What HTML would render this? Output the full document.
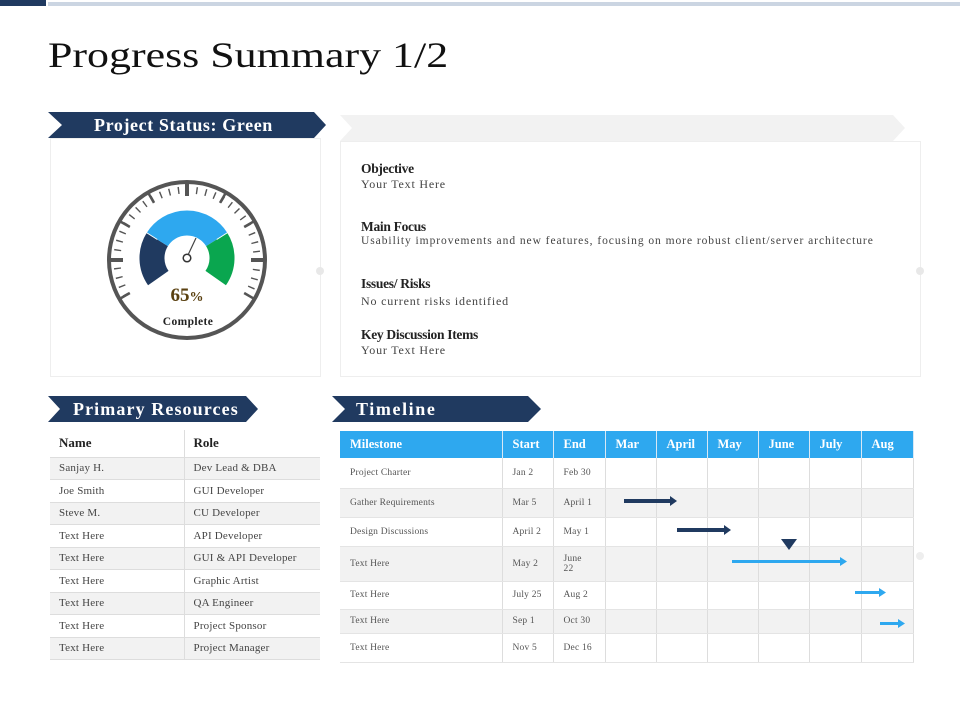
<!DOCTYPE html>
<html><head><meta charset="utf-8"><style>
*{margin:0;padding:0;box-sizing:border-box}
body{width:960px;height:720px;background:#fff;position:relative;overflow:hidden;font-family:"Liberation Serif",serif;color:#333}
.a{position:absolute}
.title{left:48px;top:34px;font-size:36px;color:#111;transform:scaleX(1.22);transform-origin:left top;white-space:nowrap}
.bn{color:#fff;font-size:18px;font-weight:bold;line-height:26px;white-space:nowrap}
.sec{font-size:13.5px;font-weight:bold;color:#222;letter-spacing:-0.3px}
.txt{font-size:12px;color:#444;white-space:nowrap}
table{border-collapse:collapse;position:absolute}
.rt td{height:22.5px;font-size:11px;color:#444;padding-left:9px;border-bottom:1px solid #ddd;letter-spacing:0.2px}
.rt td+td{border-left:1px solid #ddd}
.rt tr:nth-child(even) td{background:#f2f2f2}
.rt th{height:27px;text-align:left;font-size:13px;padding-left:9px;color:#222;border-bottom:1px solid #ddd}
.rt th+th{border-left:1px solid #ddd}
.gt th{background:#2ea8ef;color:#fff;font-size:12.5px;height:27px;text-align:left;padding-left:10px;border-right:1px solid #d8e8f5}
.gt td{font-size:9.5px;color:#555;padding-left:10px;border-right:1px solid #ddd;border-bottom:1px solid #e4e4e4;letter-spacing:0.2px}
</style></head><body>
<div class="a" style="left:0;top:0;width:46px;height:6px;background:#203a60"></div>
<div class="a" style="left:48px;top:2px;width:912px;height:4px;background:#cbd5e2"></div>
<div class="a title">Progress Summary 1/2</div>

<svg class="a" style="left:0;top:0" width="960" height="720">
<polygon points="48,112 314,112 326,125 314,138 48,138 62,125" fill="#203a60"/>
<polygon points="340,115 893,115 905,128 893,141 340,141 352,128" fill="#f2f2f2"/>
<polygon points="48,396 246,396 258,409 246,422 48,422 60,409" fill="#203a60"/>
<polygon points="332,396 528,396 541,409 528,422 332,422 345,409" fill="#203a60"/>
<rect x="50.5" y="138.5" width="270" height="238" fill="none" stroke="#eee"/>
<rect x="340.5" y="141.5" width="580" height="235" fill="none" stroke="#eee"/>
<circle cx="320" cy="271" r="4" fill="#e8e8e8"/>
<circle cx="920" cy="271" r="4" fill="#e8e8e8"/>
<circle cx="920" cy="556" r="4" fill="#eee"/>
<circle cx="187" cy="260" r="78" fill="#fff" stroke="#555" stroke-width="4"/>
<path d="M126.4 295 A70 70 0 1 1 247.6 295" fill="none" stroke="#555" stroke-width="7" stroke-dasharray="1.4 7.76"/>
<g stroke="#555" stroke-width="2.5">
<line x1="187" y1="182" x2="187" y2="196" stroke-width="4" transform="rotate(0 187 260)"/>
<line x1="187" y1="182" x2="187" y2="196" stroke-width="4" transform="rotate(90 187 260)"/>
<line x1="187" y1="182" x2="187" y2="196" stroke-width="4" transform="rotate(-90 187 260)"/>
<line x1="187" y1="182" x2="187" y2="194" transform="rotate(30 187 260)"/>
<line x1="187" y1="182" x2="187" y2="194" transform="rotate(60 187 260)"/>
<line x1="187" y1="182" x2="187" y2="194" transform="rotate(120 187 260)"/>
<line x1="187" y1="182" x2="187" y2="194" transform="rotate(-30 187 260)"/>
<line x1="187" y1="182" x2="187" y2="194" transform="rotate(-60 187 260)"/>
<line x1="187" y1="182" x2="187" y2="194" transform="rotate(-120 187 260)"/>
</g>
<g fill="none" stroke-width="25">
<path d="M158.3 278.1 A35 35 0 0 1 157.3 239.5" stroke="#203a60"/>
<path d="M157.3 239.5 A35 35 0 0 1 216.7 239.5" stroke="#2ea8ef"/>
<path d="M216.7 239.5 A35 35 0 0 1 215.7 278.1" stroke="#0aa64f"/>
</g>
<line x1="157.3" y1="239.5" x2="136" y2="226" stroke="#fff" stroke-width="1"/>
<line x1="216.7" y1="239.5" x2="238" y2="226" stroke="#fff" stroke-width="1"/>
<line x1="188" y1="255" x2="196" y2="238" stroke="#444" stroke-width="1.2"/>
<circle cx="187" cy="258" r="3.8" fill="#fff" stroke="#333" stroke-width="1.5"/>
<text x="187" y="301" text-anchor="middle" font-family="Liberation Serif" font-size="19" font-weight="bold" fill="#5a4010">65<tspan font-size="14">%</tspan></text>
<text x="188" y="325" text-anchor="middle" font-family="Liberation Serif" font-size="11.5" font-weight="bold" fill="#222" letter-spacing="0.4">Complete</text>
</svg>

<div class="a bn" style="left:94px;top:112px;letter-spacing:0.6px">Project Status: Green</div>
<div class="a bn" style="left:73px;top:396px;letter-spacing:1.1px">Primary Resources</div>
<div class="a bn" style="left:356px;top:396px;letter-spacing:1.6px">Timeline</div>

<div class="a sec" style="left:361px;top:161px">Objective</div>
<div class="a txt" style="left:361px;top:177px;letter-spacing:0.8px">Your Text Here</div>
<div class="a sec" style="left:361px;top:219px">Main Focus</div>
<div class="a txt" style="left:361px;top:235px;font-size:11.5px;letter-spacing:0.95px">Usability improvements and new features, focusing on more robust client/server architecture</div>
<div class="a sec" style="left:361px;top:276px">Issues/ Risks</div>
<div class="a txt" style="left:361px;top:294px;letter-spacing:0.8px">No current risks identified</div>
<div class="a sec" style="left:361px;top:327px">Key Discussion Items</div>
<div class="a txt" style="left:361px;top:343px;letter-spacing:0.8px">Your Text Here</div>

<table class="rt" style="left:50px;top:430px;width:270px">
<tr><th style="width:134px">Name</th><th>Role</th></tr>
<tr><td>Sanjay H.</td><td>Dev Lead &amp; DBA</td></tr>
<tr><td>Joe Smith</td><td>GUI Developer</td></tr>
<tr><td>Steve M.</td><td>CU Developer</td></tr>
<tr><td>Text Here</td><td>API Developer</td></tr>
<tr><td>Text Here</td><td>GUI &amp; API Developer</td></tr>
<tr><td>Text Here</td><td>Graphic Artist</td></tr>
<tr><td>Text Here</td><td>QA Engineer</td></tr>
<tr><td>Text Here</td><td>Project Sponsor</td></tr>
<tr><td>Text Here</td><td>Project Manager</td></tr>
</table>

<table class="gt" style="left:340px;top:431px;width:573px;table-layout:fixed">
<colgroup><col style="width:162px"><col style="width:51px"><col style="width:52px"><col style="width:51px"><col style="width:51px"><col style="width:51px"><col style="width:51px"><col style="width:52px"><col style="width:52px"></colgroup>
<tr><th>Milestone</th><th>Start</th><th>End</th><th>Mar</th><th>April</th><th>May</th><th>June</th><th>July</th><th>Aug</th></tr>
<tr style="height:30px;background:#fff"><td>Project Charter</td><td>Jan 2</td><td>Feb 30</td><td></td><td></td><td></td><td></td><td></td><td></td></tr>
<tr style="height:29px;background:#f2f2f2"><td>Gather Requirements</td><td>Mar 5</td><td>April 1</td><td></td><td></td><td></td><td></td><td></td><td></td></tr>
<tr style="height:29px;background:#fff"><td>Design Discussions</td><td>April 2</td><td>May 1</td><td></td><td></td><td></td><td></td><td></td><td></td></tr>
<tr style="height:35px;background:#f2f2f2"><td>Text Here</td><td>May 2</td><td>June<br>22</td><td></td><td></td><td></td><td></td><td></td><td></td></tr>
<tr style="height:28px;background:#fff"><td>Text Here</td><td>July 25</td><td>Aug 2</td><td></td><td></td><td></td><td></td><td></td><td></td></tr>
<tr style="height:24px;background:#f2f2f2"><td>Text Here</td><td>Sep 1</td><td>Oct 30</td><td></td><td></td><td></td><td></td><td></td><td></td></tr>
<tr style="height:29px;background:#fff"><td>Text Here</td><td>Nov 5</td><td>Dec 16</td><td></td><td></td><td></td><td></td><td></td><td></td></tr>
</table>

<svg class="a" style="left:0;top:0" width="960" height="720">
<g fill="#203a60">
<rect x="624" y="499" width="47" height="4"/><polygon points="670,496 677,501 670,506"/>
<rect x="677" y="528" width="48" height="4"/><polygon points="724,525 731,530 724,535"/>
<polygon points="781,539 797,539 789,550"/>
</g>
<g fill="#2ea8ef">
<rect x="732" y="560" width="109" height="3"/><polygon points="840,557 847,561.5 840,566"/>
<rect x="855" y="591" width="25" height="3"/><polygon points="879,588 886,592.5 879,597"/>
<rect x="880" y="622" width="19" height="3"/><polygon points="898,619 905,623.5 898,628"/>
</g>
</svg>
</body></html>
